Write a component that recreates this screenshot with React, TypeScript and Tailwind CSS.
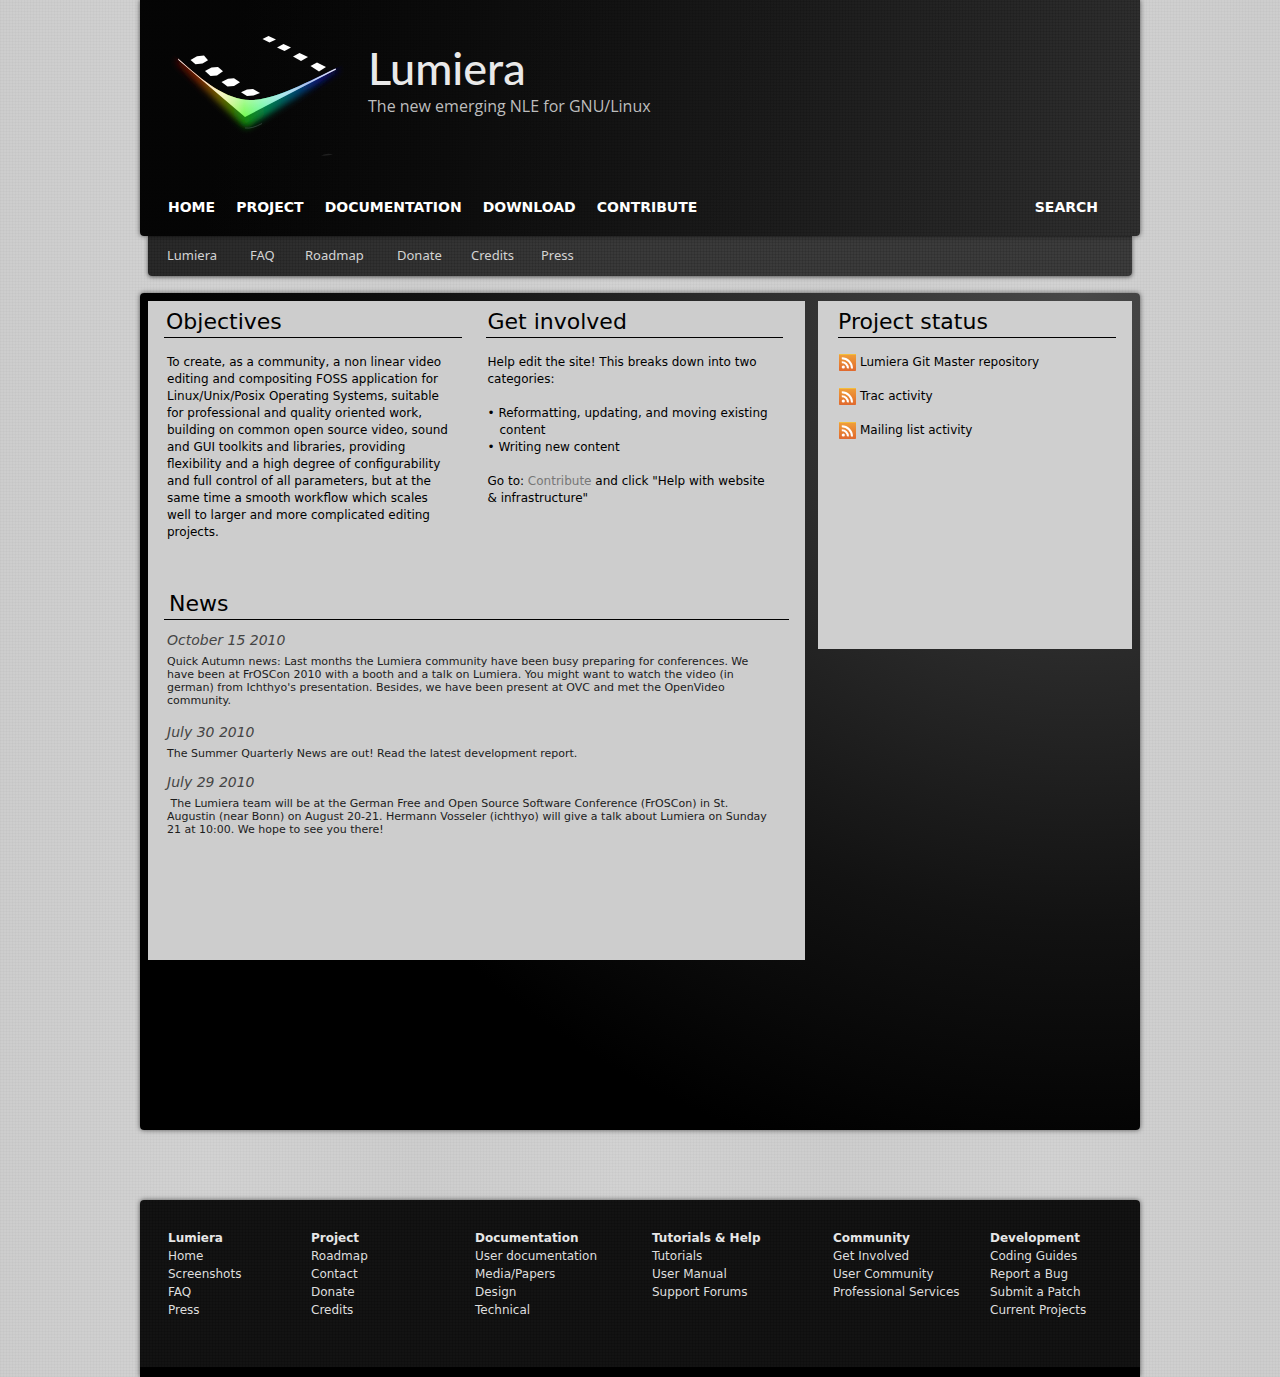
import React from "react";

const mainNav = ["HOME", "PROJECT", "DOCUMENTATION", "DOWNLOAD", "CONTRIBUTE"];
const subNav = ["Lumiera", "FAQ", "Roadmap", "Donate", "Credits", "Press"];
const feeds = ["Lumiera Git Master repository", "Trac activity", "Mailing list activity"];

const news = [
  {
    date: "October 15 2010",
    text: "Quick Autumn news: Last months the Lumiera community have been busy preparing for conferences. We have been at FrOSCon 2010 with a booth and a talk on Lumiera. You might want to watch the video (in german) from Ichthyo's presentation. Besides, we have been present at OVC and met the OpenVideo community.",
    space: "mb-[15px]",
  },
  {
    date: "July 30 2010",
    text: "The Summer Quarterly News are out! Read the latest development report.",
    space: "mb-3",
  },
  {
    date: "July 29 2010",
    text: "\u00a0The Lumiera team will be at the German Free and Open Source Software Conference (FrOSCon) in St. Augustin (near Bonn) on August 20-21. Hermann Vosseler (ichthyo) will give a talk about Lumiera on Sunday 21 at 10:00. We hope to see you there!",
    space: "",
  },
];

const footer = [
  { title: "Lumiera", links: ["Home", "Screenshots", "FAQ", "Press"] },
  { title: "Project", links: ["Roadmap", "Contact", "Donate", "Credits"] },
  { title: "Documentation", links: ["User documentation", "Media/Papers", "Design", "Technical"] },
  { title: "Tutorials & Help", links: ["Tutorials", "User Manual", "Support Forums"] },
  { title: "Community", links: ["Get Involved", "User Community", "Professional Services"] },
  { title: "Development", links: ["Coding Guides", "Report a Bug", "Submit a Patch", "Current Projects"] },
];

function Logo() {
  return (
    <svg viewBox="160 20 200 140" className="h-[140px] w-[200px] shrink-0" role="img" aria-label="Lumiera logo">
      <defs>
        <linearGradient id="glow" gradientUnits="userSpaceOnUse" x1="176" y1="0" x2="340" y2="0">
          <stop offset="0" stopColor="#5a0800" />
          <stop offset="0.14" stopColor="#7a2500" />
          <stop offset="0.27" stopColor="#6a6000" />
          <stop offset="0.42" stopColor="#148a0c" />
          <stop offset="0.54" stopColor="#068048" />
          <stop offset="0.7" stopColor="#04546c" />
          <stop offset="0.87" stopColor="#0a1c84" />
          <stop offset="1" stopColor="#100a48" />
        </linearGradient>
        <linearGradient id="blade" gradientUnits="userSpaceOnUse" x1="178" y1="0" x2="336" y2="0">
          <stop offset="0" stopColor="#ffe6e0" />
          <stop offset="0.16" stopColor="#f8c090" />
          <stop offset="0.28" stopColor="#f0f08a" />
          <stop offset="0.42" stopColor="#78fa58" />
          <stop offset="0.54" stopColor="#60f4a0" />
          <stop offset="0.66" stopColor="#60d4dc" />
          <stop offset="0.82" stopColor="#5a80dc" />
          <stop offset="1" stopColor="#d8d8ff" />
        </linearGradient>
        <linearGradient id="sheen" gradientUnits="userSpaceOnUse" x1="0" y1="84" x2="0" y2="116">
          <stop offset="0.3" stopColor="#fff" stopOpacity="0.5" />
          <stop offset="1" stopColor="#fff" stopOpacity="0" />
        </linearGradient>
        <clipPath id="below">
          <path d="M160 43 L178 58 C204 82 226 99.500 250 100 C272 100 298 87 336 68 L360 56 V160 H160 Z" />
        </clipPath>
        <filter id="soft" x="-20%" y="-30%" width="140%" height="160%">
          <feGaussianBlur stdDeviation="3.8" />
        </filter>
        <filter id="edge">
          <feGaussianBlur stdDeviation="0.4" />
        </filter>
      </defs>
      <g clipPath="url(#below)">
        <path d="M176 62 L246 128 L340 70 L334 66 L246 102 L180 58 Z" fill="url(#glow)" filter="url(#soft)" />
        <path d="M181 62 L245 122 L330 73 L246 104 Z" fill="url(#glow)" filter="url(#soft)" opacity="0.7" />
      </g>
      <path d="M178 58.500 C204 82 226 99.500 250 100 C272 100 298 87 335.500 68.500 L336 69.500 L245 117 L178.500 60 Z" fill="url(#blade)" filter="url(#edge)" />
      <path d="M178 58.500 C204 82 226 99.500 250 100 C272 100 298 87 335.500 68.500 L336 69.500 L245 117 L178.500 60 Z" fill="url(#sheen)" filter="url(#edge)" />
      <g fill="#fff" filter="url(#edge)">
        <path d="M190.500 60 L197 56.200 L204 55.500 L208 60.200 L202.500 63.500 L195.500 64.200 Z" />
        <path d="M205 71 L211.500 67.500 L218 67 L223 71.200 L217 75.500 L210.500 76 Z" />
        <path d="M221.500 82 L228 78.700 L234 78.200 L240 82.200 L234 86 L227.500 86.500 Z" />
        <path d="M241 92.200 L247 89.500 L253 89 L260 93 L253.500 95.500 L247 96 Z" />
        <path d="M262.500 39 L268.500 36 L276 39.500 L269.500 42.500 Z" />
        <path d="M277 47.500 L283.500 44 L291 47.500 L284.500 51 Z" />
        <path d="M293 56.500 L299.500 53 L308 57 L301 61 Z" />
        <path d="M310.500 66 L317 62.500 L326 67 L319 71.500 Z" />
      </g>
      <path d="M245 128 Q252 129 262 123.500" fill="none" stroke="#4a5a50" strokeWidth="1" opacity="0.6" />
      <path d="M321 155.500 Q328 152.500 333 154.500 Q328 156 321 155.500 Z" fill="#202020" />
    </svg>
  );
}

function FeedIcon() {
  return (
    <svg viewBox="0 0 17 17" className="h-[17px] w-[17px] shrink-0" aria-hidden="true">
      <defs>
        <linearGradient id="feed" x1="0" y1="0" x2="0" y2="1">
          <stop offset="0" stopColor="#f0a03a" />
          <stop offset="1" stopColor="#e0692e" />
        </linearGradient>
      </defs>
      <rect width="17" height="17" rx="0.800" fill="url(#feed)" />
      <rect width="17" height="1" fill="#f3bd3c" />
      <circle cx="4.300" cy="13" r="1.600" fill="#fff" />
      <path d="M2.800 8.300 A5.900 5.900 0 0 1 8.900 14.400" fill="none" stroke="#fff" strokeWidth="2" />
      <path d="M2.800 4.200 A10.200 10.200 0 0 1 13 14.400" fill="none" stroke="#fff" strokeWidth="2" />
    </svg>
  );
}

function SectionTitle({ children, className = "" }: { children: React.ReactNode; className?: string }) {
  return (
    <h2 className={`h-[37px] border-b border-black pt-[5px] text-[22px] leading-8 text-black ${className}`}>{children}</h2>
  );
}

const weaveLight =
  "bg-[repeating-linear-gradient(0deg,rgba(0,0,0,0.02)_0_1px,transparent_1px_3px),repeating-linear-gradient(90deg,rgba(0,0,0,0.02)_0_1px,transparent_1px_3px),repeating-linear-gradient(90deg,#cdcdcd,#d2d2d2_210px,#cdcdcd_420px)]";
const weaveHeader =
  "bg-[repeating-linear-gradient(0deg,rgba(0,0,0,0.1)_0_1px,transparent_1px_3px),repeating-linear-gradient(90deg,rgba(0,0,0,0.1)_0_1px,transparent_1px_3px),linear-gradient(100deg,#050505_10%,#0c0c0c_32%,#191919_58%,#303030_100%)]";
const weaveSub =
  "bg-[repeating-linear-gradient(0deg,rgba(0,0,0,0.1)_0_1px,transparent_1px_3px),repeating-linear-gradient(90deg,rgba(0,0,0,0.1)_0_1px,transparent_1px_3px),linear-gradient(90deg,#292929,#3a3a3a_50%,#3c3c3c)]";
const weaveFooter =
  "bg-[repeating-linear-gradient(0deg,rgba(0,0,0,0.15)_0_1px,transparent_1px_3px),repeating-linear-gradient(90deg,rgba(0,0,0,0.15)_0_1px,transparent_1px_3px),linear-gradient(#131313,#131313)]";

export default function App() {
  return (
    <div className={`min-h-screen font-['DejaVu_Sans',Verdana,sans-serif] ${weaveLight}`}>
      <div className="mx-auto flex min-h-screen max-w-[1000px] flex-col">
        <header>
          <div className={`relative rounded-b shadow-[0_0_5px_rgba(0,0,0,0.6)] ${weaveHeader}`}>
            <div className="flex pt-5 pl-5">
              <Logo />
              <div className="pt-5 pl-2">
                <h1 className="font-['Lato','Open_Sans',sans-serif] text-[45px] leading-[56px] font-medium text-[#e9e9e9]">Lumiera</h1>
                <p className="font-['Open_Sans','Noto_Sans',sans-serif] text-[16px] leading-5 text-[#bdbdbd]">The new emerging NLE for GNU/Linux</p>
              </div>
            </div>
            <nav aria-label="Main" className="flex flex-wrap items-center gap-x-[21px] pt-9 pr-[42px] pb-[18px] pl-7 text-[14px] leading-[22px] font-bold text-white">
              {mainNav.map((n) => (
                <a key={n} href="#">{n}</a>
              ))}
              <a href="#" className="ml-auto">SEARCH</a>
            </nav>
          </div>
          <nav
            aria-label="Section"
            className={`mx-2 grid h-10 grid-cols-[83px_55px_92px_74px_70px_auto] items-center rounded-b pl-[19px] font-['Noto_Sans',sans-serif] text-[13px] text-[#d4d4d4] shadow-[0_1px_4px_rgba(0,0,0,0.6)] ${weaveSub}`}
          >
            {subNav.map((n) => (
              <a key={n} href="#">{n}</a>
            ))}
          </nav>
        </header>

        <main className="mt-[17px] grid min-h-[837px] grid-cols-[657fr_314fr] items-start gap-[13px] rounded bg-[radial-gradient(ellipse_920px_900px_at_94%_0%,#484848_0%,#2c2c2c_38%,#121212_70%,#000_100%)] p-2 shadow-[0_0_5px_rgba(0,0,0,0.6)]">
          <div className="min-h-[659px] bg-[#cdcdcd] px-4">
            <div className="grid min-h-[282px] grid-cols-2 gap-6 pr-[6px]">
              <section>
                <SectionTitle className="pl-[2px]">Objectives</SectionTitle>
                <p className="mt-4 pr-3 pl-[3px] text-[12px] leading-[17px] text-black">
                  To create, as a community, a non linear video editing and compositing FOSS application for Linux/Unix/Posix Operating Systems, suitable for professional and quality oriented work, building on common open source video, sound and GUI toolkits and libraries, providing flexibility and a high degree of configurability and full control of all parameters, but at the same time a smooth workflow which scales well to larger and more complicated editing projects.
                </p>
              </section>
              <section>
                <SectionTitle className="pl-[2px]">Get involved</SectionTitle>
                <div className="mt-4 pr-3 pl-[2px] text-[12px] leading-[17px] text-black">
                  <p>Help edit the site! This breaks down into two categories:</p>
                  <ul className="my-[17px]">
                    <li className="pl-3 -indent-3">• Reformatting, updating, and moving existing content</li>
                    <li className="pl-3 -indent-3">• Writing new content</li>
                  </ul>
                  <p>
                    Go to: <a href="#" className="text-[#777]">Contribute</a> and click "Help with website &amp; infrastructure"
                  </p>
                </div>
              </section>
            </div>
            <section>
              <SectionTitle className="pl-[5px]">News</SectionTitle>
              <div className="pt-[10px] pl-[3px]">
                {news.map((n) => (
                  <article key={n.date} className={n.space}>
                    <h3 className="text-[14px] leading-5 text-[#444] italic">{n.date}</h3>
                    <p className="mt-[5px] pr-3 text-[11px] leading-[13px] text-[#1c1c1c]">{n.text}</p>
                  </article>
                ))}
              </div>
            </section>
          </div>

          <aside className="min-h-[348px] bg-[#cfcfcf] pr-4 pl-5">
            <SectionTitle>Project status</SectionTitle>
            <ul className="mt-4 flex flex-col gap-[17px] pl-px text-[12px] leading-[17px] text-black">
              {feeds.map((f) => (
                <li key={f}>
                  <a href="#" className="flex gap-1">
                    <FeedIcon />
                    {f}
                  </a>
                </li>
              ))}
            </ul>
          </aside>
        </main>

        <footer className={`mt-[70px] flex grow flex-col rounded-t shadow-[0_0_5px_rgba(0,0,0,0.6)] ${weaveFooter}`}>
          <div className="grid min-h-[167px] grid-cols-[143fr_164fr_177fr_181fr_157fr_122fr] px-7 pt-[29px] text-[12px] leading-[18px] text-[#dedede]">
            {footer.map((c) => (
              <div key={c.title}>
                <h4 className="font-bold text-[#e6e6e6]">{c.title}</h4>
                <ul>
                  {c.links.map((l) => (
                    <li key={l}>
                      <a href="#">{l}</a>
                    </li>
                  ))}
                </ul>
              </div>
            ))}
          </div>
          <div className="min-h-[10px] grow bg-black" />
        </footer>
      </div>
    </div>
  );
}
